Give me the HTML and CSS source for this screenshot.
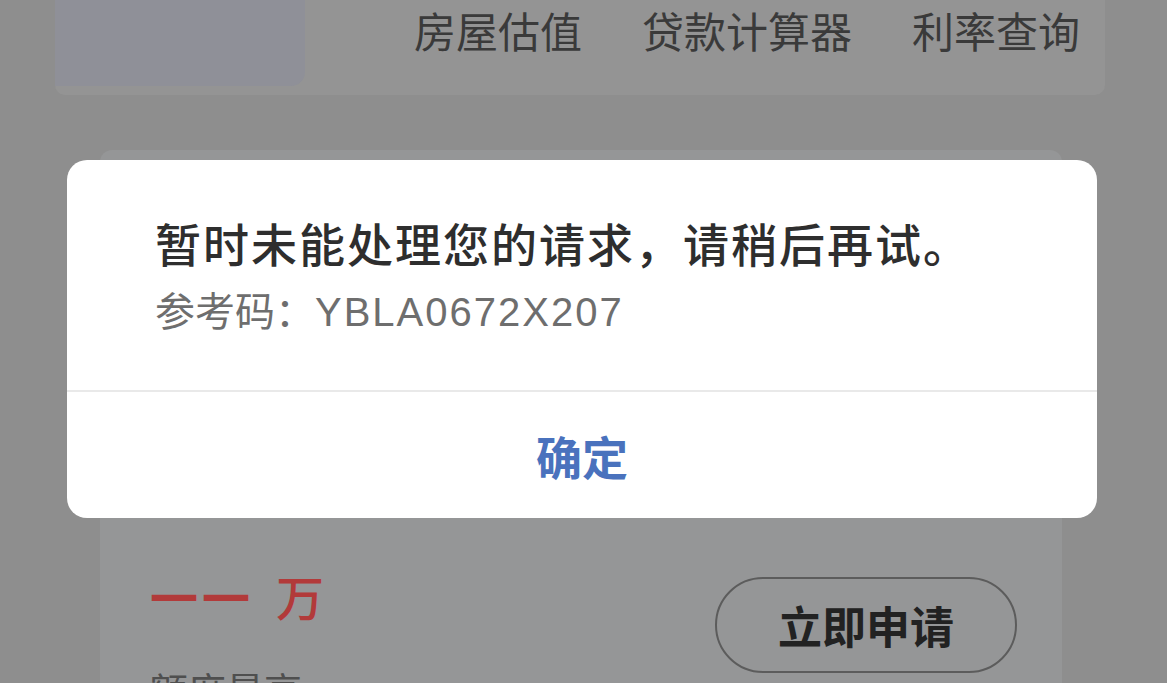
FILE: index.html
```html
<!DOCTYPE html>
<html lang="zh-CN">
<head>
<meta charset="utf-8">
<title>提示</title>
<link rel="stylesheet" href="styles.css">
</head>
<body>
<div class="page">
  <div class="top-card">
    <div class="banner"></div>
    <nav class="tools">
      <span class="tool">房屋估值</span>
      <span class="tool">贷款计算器</span>
      <span class="tool">利率查询</span>
    </nav>
  </div>
  <div class="loan-card">
    <div class="loan-row">
      <div class="amount"><span class="dash">一一</span><span class="unit">万</span></div>
      <button class="apply">立即申请</button>
    </div>
    <div class="limit">额度最高</div>
  </div>

  <div class="dialog">
    <div class="dialog-body">
      <div class="dialog-title">暂时未能处理您的请求，请稍后再试。</div>
      <div class="dialog-ref">参考码：<span class="ref-code">YBLA0672X207</span></div>
    </div>
    <div class="dialog-actions">
      <span class="confirm">确定</span>
    </div>
  </div>
</div>
</body>
</html>
```
FILE: styles.css
```css
html, body {
  margin: 0;
  padding: 0;
}
body {
  background: #8e8e8e;
  font-family: "Noto Sans CJK SC", "Noto Sans", sans-serif;
  width: 1167px;
  height: 683px;
  overflow: hidden;
}
.page {
  position: relative;
  width: 1167px;
  height: 683px;
  overflow: hidden;
}
.top-card {
  margin: 0 62px 0 55px;
  height: 95px;
  background: #949494;
  display: flex;
  align-items: flex-start;
  border-radius: 0 0 10px 10px;
}
.banner {
  width: 250px;
  height: 86px;
  background: #8f9098;
  border-radius: 0 0 14px 0;
}
.tools {
  flex: 1;
  display: flex;
  justify-content: flex-end;
  gap: 60px;
  padding: 4px 25px 0 0;
}
.tool {
  font-size: 42px;
  line-height: 52px;
  color: #3a3a3a;
}
.loan-card {
  margin: 55px 105px 0 100px;
  height: 600px;
  background: #959697;
  padding: 427px 45px 0 50px;
  box-sizing: border-box;
  border-radius: 12px;
}
.loan-row {
  display: flex;
  justify-content: space-between;
  align-items: flex-start;
}
.amount {
  margin-top: -12px;
  font-size: 48px;
  line-height: 60px;
  color: #b23a3a;
  font-weight: 500;
  display: flex;
  gap: 22px;
}
.dash {
  letter-spacing: 4px;
  font-weight: 700;
}
.apply {
  width: 302px;
  height: 96px;
  border: 2px solid #5c5c5c;
  border-radius: 48px;
  background: transparent;
  font-family: inherit;
  font-size: 44px;
  font-weight: 700;
  color: #222;
  padding: 0;
}
.limit {
  margin-top: -4px;
  font-size: 38px;
  line-height: 40px;
  color: #4f4f4f;
}
.dialog {
  position: absolute;
  left: 67px;
  top: 160px;
  width: 1030px;
  height: 358px;
  background: #fff;
  border-radius: 20px;
  display: flex;
  flex-direction: column;
  overflow: hidden;
}
.dialog-body {
  height: 232px;
  box-sizing: border-box;
  padding: 50px 0 0 88px;
  border-bottom: 2px solid #e9e9e9;
}
.dialog-title {
  font-size: 46px;
  line-height: 64px;
  font-weight: 500;
  color: #2e2e2e;
  letter-spacing: 2px;
}
.dialog-ref {
  margin-top: 10px;
  font-size: 40px;
  line-height: 50px;
  color: #6e6e6e;
}
.ref-code {
  font-family: "Liberation Sans", "Noto Sans", sans-serif;
  letter-spacing: 2px;
}
.dialog-actions {
  flex: 1;
  display: flex;
  align-items: center;
  justify-content: center;
}
.confirm {
  font-size: 46px;
  font-weight: 700;
  color: #4a72bd;
}
```
